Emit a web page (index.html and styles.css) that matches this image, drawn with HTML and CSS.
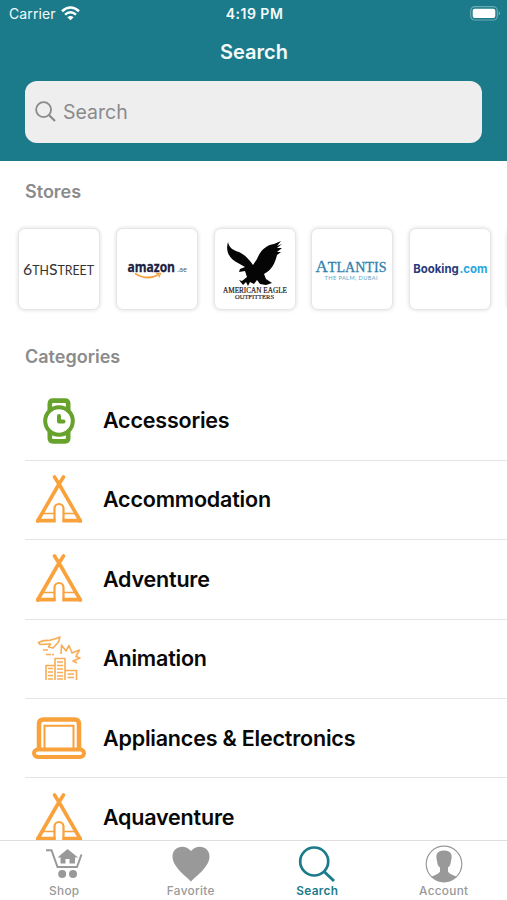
FILE: index.html
```html
<!DOCTYPE html>
<html lang="en">
<head>
<meta charset="utf-8">
<title>Search</title>
<link rel="stylesheet" href="styles.css">
</head>
<body>
<svg width="0" height="0" class="defs" aria-hidden="true">
  <symbol id="tent" viewBox="0 0 48 50">
    <g fill="none" stroke="#f9a13a" stroke-linejoin="round">
      <path stroke-width="3.600" stroke-linecap="round" d="M19.500 2L24 9 45.300 46M28.500 2L24 9 2.700 46"/>
      <path stroke-width="2.200" d="M19.500 47V33.500a4.500 4.500 0 0 1 9 0V47"/>
      <path stroke-width="1.700" d="M8 38.500h11M29 38.500h11"/>
      <path stroke-width="3.800" d="M1.500 45.700h19M27.500 45.700h19"/>
    </g>
  </symbol>
</svg>
<div class="screen">
  <header class="header">
    <div class="status">
      <div class="carrier"><span>Carrier</span>
        <svg width="19" height="15" viewBox="0 0 19 15" fill="none" stroke="#fff" stroke-width="2.500"><path d="M1 5.300Q9.500-2.300 18 5.300M4 8.600q5.500-4.600 11 0"/><path d="M6.400 11.200q3.100-2.500 6.200 0L9.500 14.300z" fill="#fff" stroke="none"/></svg>
      </div>
      <div class="clock">4:19 PM</div>
      <svg class="battery" width="31" height="15" viewBox="0 0 31 15"><rect x=".7" y=".7" width="26.600" height="13.300" rx="4" fill="none" stroke="#fff" stroke-opacity=".35" stroke-width="1.200"/><rect x="2.700" y="2.700" width="22.600" height="9.300" rx="2" fill="#fff"/><path d="M28.800 5q2.200 2.300 0 4.600z" fill="#fff" fill-opacity=".5"/></svg>
    </div>
    <h1>Search</h1>
    <div class="searchbox">
      <svg width="21" height="21" viewBox="0 0 21 21" fill="none" stroke="#8a8a8c" stroke-width="1.800"><circle cx="8.600" cy="8.600" r="7.500"/><path stroke-width="2.200" d="M14 14l6 6"/></svg>
      <span>Search</span>
    </div>
  </header>
  <main>
    <h2 class="stores-title">Stores</h2>
    <div class="stores">
      <div class="card"><svg viewBox="0 0 80 80"><g font-family="Lato" fill="#333"><text x="4" y="46" font-size="12.500" textLength="71" lengthAdjust="spacingAndGlyphs"><tspan font-size="16">6</tspan>TH<tspan font-size="16">S</tspan>TREET</text></g></svg></div>
      <div class="card"><svg viewBox="0 0 80 80"><text x="10.500" y="43" font-family="Open Sans" font-weight="700" font-size="14" fill="#1b2140" stroke="#1b2140" stroke-width=".3" textLength="47.500" lengthAdjust="spacingAndGlyphs">amazon</text><text x="60" y="43" font-family="Open Sans" font-size="8" fill="#555" textLength="10" lengthAdjust="spacingAndGlyphs">.ae</text><path d="M18 44.500q12 7.500 24 1" fill="none" stroke="#f7a13c" stroke-width="1.800"/><path d="M39 44.500l4.500-.2-1.500 4" fill="none" stroke="#f7a13c" stroke-width="1.200"/></svg></div>
      <div class="card"><svg viewBox="0 0 80 80"><path fill="#050505" d="M13 13C10 23 15 30 23 34L30 38 25 40 24 43 30 42 32 48 27 52 24 51 28 56 31 53 33 57 35 53 39 55 42 51 45 55 51 56 57 54 51 50 49 45C57 41 60 34 62 26L66 23 62 23 67 19 62 19 67 15 62 17 66 12 59 15C51 16 45 22 42 30L38 36C33 29 30 26 24 23 17 21 14 18 13 13Z"/><text x="8" y="63.500" font-family="Liberation Serif" font-size="7.500" fill="#222" stroke="#222" stroke-width=".2" textLength="64" lengthAdjust="spacingAndGlyphs">AMERICAN EAGLE</text><text x="20" y="69.500" font-family="Liberation Serif" font-size="5.500" fill="#333" stroke="#333" stroke-width=".2" textLength="39" lengthAdjust="spacingAndGlyphs">OUTFITTERS</text></svg></div>
      <div class="card"><svg viewBox="0 0 80 80"><g font-family="Liberation Serif" fill="#337fae"><text x="3.500" y="43" font-size="14" stroke="#337fae" stroke-width=".3" textLength="71" lengthAdjust="spacingAndGlyphs"><tspan font-size="17">A</tspan>TLANTIS</text></g><text x="12.500" y="51" font-family="Lato" font-size="5.600" fill="#5aa5c4" textLength="53">THE PALM, DUBAI</text></svg></div>
      <div class="card"><svg viewBox="0 0 80 80"><g font-family="Inter" font-weight="700" font-size="12"><text x="3.200" y="44" fill="#273a7c" textLength="45.500" lengthAdjust="spacingAndGlyphs">Booking</text><text x="49.500" y="44" fill="#2ba6e0" textLength="28" lengthAdjust="spacingAndGlyphs">.com</text></g></svg></div>
      <div class="card"></div>
    </div>
    <h2 class="cat-title">Categories</h2>
    <ul class="cats">
      <li><span class="ic"><svg width="34" height="48" viewBox="0 0 34 48" fill="none" stroke="#66a22c"><path stroke-width="4.600" d="M7.800 13V7Q7.800 3.600 11 3.600h12Q26.200 3.600 26.200 7V13M7.800 35v6Q7.800 44.400 11 44.400h12q3.200 0 3.200-3.400V35"/><circle cx="17" cy="24" r="13.800" stroke-width="4"/><path stroke-width="4" stroke-linecap="round" stroke-linejoin="round" d="M17 19v5.500h4.500"/></svg></span><span class="name">Accessories</span></li>
      <li><span class="ic"><svg width="48" height="50"><use href="#tent"/></svg></span><span class="name">Accommodation</span></li>
      <li><span class="ic"><svg width="48" height="50"><use href="#tent"/></svg></span><span class="name">Adventure</span></li>
      <li><span class="ic"><svg width="44" height="46" viewBox="0 0 44 46" fill="none" stroke="#f8ad57" stroke-width="1.600" stroke-linejoin="round"><path d="M1.500 6.500Q6 4 12 4.500L19 2.500 23 1 21.500 6 16 12 11.500 11 13.500 8 3 8.500ZM6 14h5M9 18.500h5M15 18.500h2"/><path d="M24 18L24.500 9 29 15 32 9.500 35 17 42.500 14 39 20.500 43 22 36 25 40 27"/><path d="M9 44V29.500H18V44M18 29.500V22.500H28V44M28 34.500H39.500V44"/><path stroke-width="1.500" d="M11 32.500h5M11 36h5M11 39.500h5M11 43h5M20 26h6M20 29.500h6M20 33h6M20 36.500h6M20 40h6M20 43h6M30.500 38h6.500M30.500 41.500h6.500"/></svg></span><span class="name">Animation</span></li>
      <li><span class="ic"><svg width="54" height="42" viewBox="0 0 54 42" fill="none" stroke="#f9a13a"><path stroke-width="4.500" d="M7 31.500V7Q7 2.500 11.500 2.500H42.500Q47 2.500 47 7V31.500"/><path stroke-width="2" d="M12.500 31V8.800H41.500V31"/><rect x="2" y="32.500" width="50" height="7.500" rx="3.700" stroke-width="4"/></svg></span><span class="name">Appliances &amp; Electronics</span></li>
      <li><span class="ic"><svg width="48" height="50"><use href="#tent"/></svg></span><span class="name">Aquaventure</span></li>
    </ul>
  </main>
  <nav class="tabs">
    <div class="tab"><svg width="38" height="38" viewBox="0 0 38 38" fill="#999"><path fill="none" stroke="#999" stroke-width="2" d="M1 5.200h5.500L12.500 22H32L36.500 9.500"/><path d="M22.500 4L33 12.500H30V18.500H24.500V14H20.500V18.500H15.500V12.500H12.500Z"/><circle cx="17.200" cy="29" r="4"/><circle cx="28" cy="29" r="4"/></svg><span>Shop</span></div>
    <div class="tab"><svg width="38" height="38" viewBox="0 0 38 38" fill="#999"><path d="M19 36.500C14 31 .5 22 .5 11.500.5 1 13-1.500 19 6 25-1.500 37.500 1 37.500 11.500 37.500 22 24 31 19 36.500Z"/></svg><span>Favorite</span></div>
    <div class="tab active"><svg width="38" height="38" viewBox="0 0 38 38" fill="none" stroke="#1c7b8a" stroke-width="2.700"><circle cx="16.200" cy="16.500" r="14"/><path stroke-width="3" d="M26 26.500L36 36"/></svg><span>Search</span></div>
    <div class="tab"><svg width="38" height="38" viewBox="0 0 38 38"><circle cx="19" cy="19" r="17.800" fill="none" stroke="#999" stroke-width="1.200"/><path fill="#999" d="M6.500 31.500Q14 29 15 26.500V22.500Q12.500 21 12 16 11 13 11.500 10 12.500 5.500 19 5.500T26.500 10Q27 13 26 16 25.500 21 23 22.500V26.500Q24 29 31.500 31.500 26 37 19 37T6.500 31.500Z"/></svg><span>Account</span></div>
  </nav>
</div>
</body>
</html>
```
FILE: styles.css
```css
* { box-sizing: border-box; }
body { margin: 0; font-family: Inter, "Liberation Sans", sans-serif; background: #fff; }
svg { display: block; }
.defs { position: absolute; }
.screen { width: 507px; height: 900px; overflow: hidden; display: flex; flex-direction: column; }
.header { flex: none; height: 161px; background: #1c7b8a; color: #f3fbfc; }
.status { height: 27px; display: grid; grid-template-columns: 1fr auto 1fr; align-items: center; padding: 0 6px 0 9px; font-size: 14px; }
.carrier { display: flex; align-items: center; gap: 5px; letter-spacing: .1px; }
.clock { font-weight: 600; letter-spacing: .5px; margin-left: -1px; }
.battery { justify-self: end; }
h1, h2 { margin: 0; }
h1 { height: 53.500px; line-height: 51px; text-align: center; font-size: 20px; font-weight: 600; padding-left: 1px; }
.searchbox { margin: 0 25px; height: 62px; border-radius: 12px; background: #eee; display: flex; align-items: center; gap: 7px; padding-left: 10px; font-size: 19.500px; color: #8a8a8c; }
main { flex: 1; min-height: 0; overflow: hidden; }
h2 { color: #8b8b8b; font-size: 18px; font-weight: 600; padding-left: 25px; }
.stores-title { height: 67px; line-height: 61px; }
.stores { display: flex; gap: 15.800px; padding-left: 18px; overflow: hidden; margin-top: -5px; padding-top: 5px; height: 92px; }
.card { flex: none; width: 82px; height: 82px; border: 1px solid #e6e6e6; border-radius: 7px; box-shadow: 0 0 4px rgba(0, 0, 0, .14); background: #fff; }
.cat-title { height: 66.400px; line-height: 83px; }
.cats { list-style: none; margin: 0; padding: 0 0 0 25px; }
.cats li { height: 79.400px; border-bottom: 1px solid #e4e4e4; display: flex; align-items: center; }
.ic { width: 67px; display: flex; justify-content: center; }
.name { margin: -1px 0 0 11px; font-size: 21.500px; font-weight: 600; letter-spacing: -.2px; color: #080808; }
.tabs { flex: none; height: 60px; border-top: 1px solid #dedede; display: grid; grid-template-columns: repeat(4, 1fr); padding-left: 1px; background: #fff; }
.tab { display: flex; flex-direction: column; align-items: center; padding-top: 4px; font-size: 11.800px; line-height: 16px; font-weight: 500; color: #999; letter-spacing: .3px; }
.tab.active { color: #1c7b8a; font-weight: 600; }
```
